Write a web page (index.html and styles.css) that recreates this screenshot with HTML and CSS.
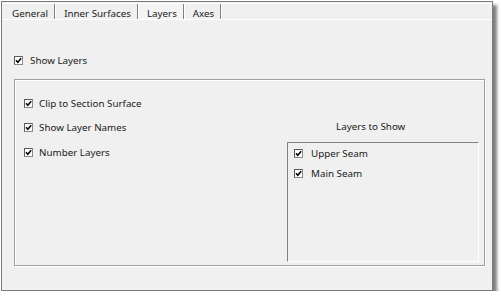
FILE: index.html
```html
<!DOCTYPE html>
<html>
<head>
<meta charset="utf-8">
<link rel="stylesheet" href="styles.css">
</head>
<body>
<div class="window">
  <div class="tabs">
    <span class="tab tab-first">General</span>
    <span class="tab">Inner Surfaces</span>
    <span class="tab tab-active">Layers</span>
    <span class="tab">Axes</span>
  </div>
  <div class="page">
    <label class="check show-layers"><span class="box"><svg viewBox="0 0 7 7" width="7" height="7"><path d="M1 3.3 L2.8 5.3 L6.2 1.2" fill="none" stroke="#000" stroke-width="1.5"/></svg></span>Show Layers</label>
    <div class="group">
      <div class="options">
        <label class="check"><span class="box"><svg viewBox="0 0 7 7" width="7" height="7"><path d="M1 3.3 L2.8 5.3 L6.2 1.2" fill="none" stroke="#000" stroke-width="1.5"/></svg></span>Clip to Section Surface</label>
        <label class="check"><span class="box"><svg viewBox="0 0 7 7" width="7" height="7"><path d="M1 3.3 L2.8 5.3 L6.2 1.2" fill="none" stroke="#000" stroke-width="1.5"/></svg></span>Show Layer Names</label>
        <label class="check"><span class="box"><svg viewBox="0 0 7 7" width="7" height="7"><path d="M1 3.3 L2.8 5.3 L6.2 1.2" fill="none" stroke="#000" stroke-width="1.5"/></svg></span>Number Layers</label>
      </div>
      <div class="layers">
        <div class="layers-title">Layers to Show</div>
        <div class="listbox">
          <label class="check item"><span class="box"><svg viewBox="0 0 7 7" width="7" height="7"><path d="M1 3.3 L2.8 5.3 L6.2 1.2" fill="none" stroke="#000" stroke-width="1.5"/></svg></span>Upper Seam</label>
          <label class="check item"><span class="box"><svg viewBox="0 0 7 7" width="7" height="7"><path d="M1 3.3 L2.8 5.3 L6.2 1.2" fill="none" stroke="#000" stroke-width="1.5"/></svg></span>Main Seam</label>
        </div>
      </div>
    </div>
  </div>
</div>
</body>
</html>
```
FILE: styles.css
```css
html, body {
  margin: 0;
  padding: 0;
  background: #ffffff;
}

body {
  font-family: "Noto Sans", "Liberation Sans", Arial, sans-serif;
  font-size: 9.8px;
  color: #1a1a1a;
}

.window {
  margin: 1px 0 0 1px;
  width: 490px;
  height: 288px;
  border: 1px solid #7a7a7a;
  background: #f0f0f0;
  box-shadow: 4px 4px 3px rgba(0, 0, 0, 0.5);
  display: flex;
  flex-direction: column;
}

.tabs {
  display: flex;
  margin-top: 1px;
  height: 15px;
  border-top: 1px solid #ffffff;
  border-bottom: 1px solid #ffffff;
}

.tab {
  padding: 4px 6px 0 8px;
  line-height: 11px;
  border-right: 1px solid #808080;
  box-shadow: 1px 0 0 #ffffff;
  margin-right: 1px;
  white-space: nowrap;
}

.tab-first {
  padding-left: 10px;
}

.tab-active {
  background: #f4f4f4;
}

.page {
  flex: 1;
  display: flex;
  flex-direction: column;
  padding: 33px 7px 24px 12px;
}

.check {
  display: flex;
  align-items: center;
  gap: 6px;
  white-space: nowrap;
}

.box {
  width: 7px;
  height: 7px;
  border: 1px solid #5a5a5a;
  border-right-color: #8a8a8a;
  border-bottom-color: #8a8a8a;
  background: #ffffff;
  display: flex;
  align-items: center;
  justify-content: center;
  flex: none;
}

.box svg {
  display: block;
}

.show-layers {
  height: 14px;
  gap: 7px;
}

.group {
  flex: 1;
  margin-top: 12px;
  border: 1px solid #a0a0a0;
  box-shadow: inset 1px 1px 0 #ffffff, 1px 1px 0 #ffffff;
  display: flex;
  padding: 0 5px 3px 9px;
}

.options {
  flex: 1;
  padding-top: 11px;
  display: flex;
  flex-direction: column;
}

.options .check {
  height: 24.5px;
}

.layers {
  width: 192px;
  display: flex;
  flex-direction: column;
  padding-top: 41px;
}

.layers-title {
  line-height: 12px;
  padding-left: 49px;
}

.listbox {
  flex: 1;
  margin-top: 9px;
  border-top: 1px solid #828282;
  border-left: 1px solid #828282;
  border-right: 1px solid #ffffff;
  border-bottom: 1px solid #ffffff;
  padding-left: 6px;
  display: flex;
  flex-direction: column;
}

.item {
  height: 20px;
  gap: 8px;
}
```
